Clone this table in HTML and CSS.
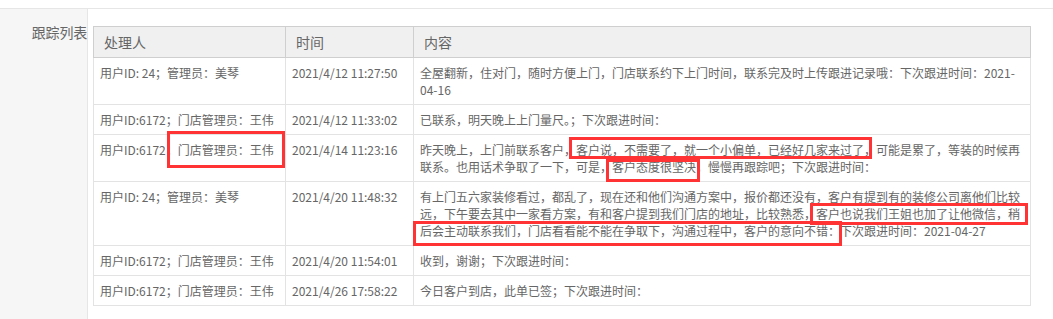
FILE: index.html
```html
<!DOCTYPE html>
<html lang="zh-CN">
<head>
<meta charset="utf-8">
<title>跟踪列表</title>
<link rel="stylesheet" href="styles.css">
</head>
<body>
<div class="topbar"></div>
<div class="section">
  <div class="side"><div class="label">跟踪列表</div></div>
  <div class="main">
    <table class="track">
      <colgroup><col class="c1"><col class="c2"><col class="c3"></colgroup>
      <thead>
        <tr><th>处理人</th><th>时间</th><th>内容</th></tr>
      </thead>
      <tbody>
        <tr>
          <td>用户ID: 24；管理员：美琴</td>
          <td>2021/4/12 11:27:50</td>
          <td>全屋翻新，住对门，随时方便上门，门店联系约下上门时间，联系完及时上传跟进记录哦：下次跟进时间：2021-<br>04-16</td>
        </tr>
        <tr>
          <td>用户ID:6172；门店管理员：王伟</td>
          <td>2021/4/12 11:33:02</td>
          <td>已联系，明天晚上上门量尺。；下次跟进时间：</td>
        </tr>
        <tr>
          <td>用户ID:6172；门店管理员：王伟</td>
          <td>2021/4/14 11:23:16</td>
          <td>昨天晚上，上门前联系客户，客户说，不需要了，就一个小偏单，已经好几家来过了，可能是累了，等装的时候再<br>联系。也用话术争取了一下，可是，客户态度很坚决，慢慢再跟踪吧；下次跟进时间：</td>
        </tr>
        <tr>
          <td>用户ID: 24；管理员：美琴</td>
          <td>2021/4/20 11:48:32</td>
          <td>有上门五六家装修看过，都乱了，现在还和他们沟通方案中，报价都还没有，客户有提到有的装修公司离他们比较<br>远，下午要去其中一家看方案，有和客户提到我们门店的地址，比较熟悉，客户也说我们王姐也加了让他微信，稍<br>后会主动联系我们，门店看看能不能在争取下，沟通过程中，客户的意向不错：下次跟进时间：2021-04-27</td>
        </tr>
        <tr>
          <td>用户ID:6172；门店管理员：王伟</td>
          <td>2021/4/20 11:54:01</td>
          <td>收到，谢谢；下次跟进时间：</td>
        </tr>
        <tr>
          <td>用户ID:6172；门店管理员：王伟</td>
          <td>2021/4/26 17:58:22</td>
          <td>今日客户到店，此单已签；下次跟进时间：</td>
        </tr>
      </tbody>
    </table>
  </div>
</div>
<div class="mark mark-1"></div>
<div class="mark mark-2"></div>
<div class="mark mark-3"></div>
<div class="mark mark-4"></div>
<div class="mark mark-5"></div>
</body>
</html>
```

FILE: styles.css
```css
html, body {
  margin: 0;
  padding: 0;
  background: #fff;
}
body {
  position: relative;
  width: 1053px;
  height: 319px;
  overflow: hidden;
  font-family: "Noto Sans CJK SC", "Liberation Sans", sans-serif;
  color: #666;
}
.topbar {
  height: 8px;
  border-bottom: 1px solid #e6e6e6;
}
.section {
  display: flex;
  height: 310px;
}
.side {
  width: 87px;
  flex: none;
  background: #f6f6f6;
  border-right: 1px solid #e6e6e6;
  padding-top: 13px;
  box-sizing: border-box;
  width: 88px;
}
.label {
  font-size: 14px;
  line-height: 20px;
  text-align: right;
  color: #666;
  letter-spacing: -0.2px;
}
.main {
  padding: 17px 0 0 5px;
}
.track {
  border-collapse: collapse;
  table-layout: fixed;
  width: 937px;
  font-size: 12px;
}
.c1 { width: 192px; }
.c2 { width: 128px; }
.c3 { width: 617px; }
.track th {
  background: #f0f0f0;
  border: 1px solid #cfcfcf;
  height: 30px;
  padding: 0 0 0 10px;
  text-align: left;
  font-weight: normal;
  font-size: 14px;
  line-height: 20px;
  color: #666;
}
.track td {
  border: 1px solid #e3e3e3;
  padding: 6px 4px 6px 6px;
  line-height: 17px;
  vertical-align: top;
  white-space: nowrap;
  color: #666;
}
.mark {
  position: absolute;
  border: 3px solid #ff3333;
  box-sizing: border-box;
}
.mark-1 { left: 167px; top: 131px; width: 118px; height: 37px; }
.mark-2 { left: 569px; top: 137px; width: 303px; height: 22px; }
.mark-3 { left: 606px; top: 159px; width: 94px; height: 23px; }
.mark-4 { left: 810px; top: 203px; width: 218px; height: 22px; }
.mark-5 { left: 413px; top: 221px; width: 429px; height: 25px; }
```
